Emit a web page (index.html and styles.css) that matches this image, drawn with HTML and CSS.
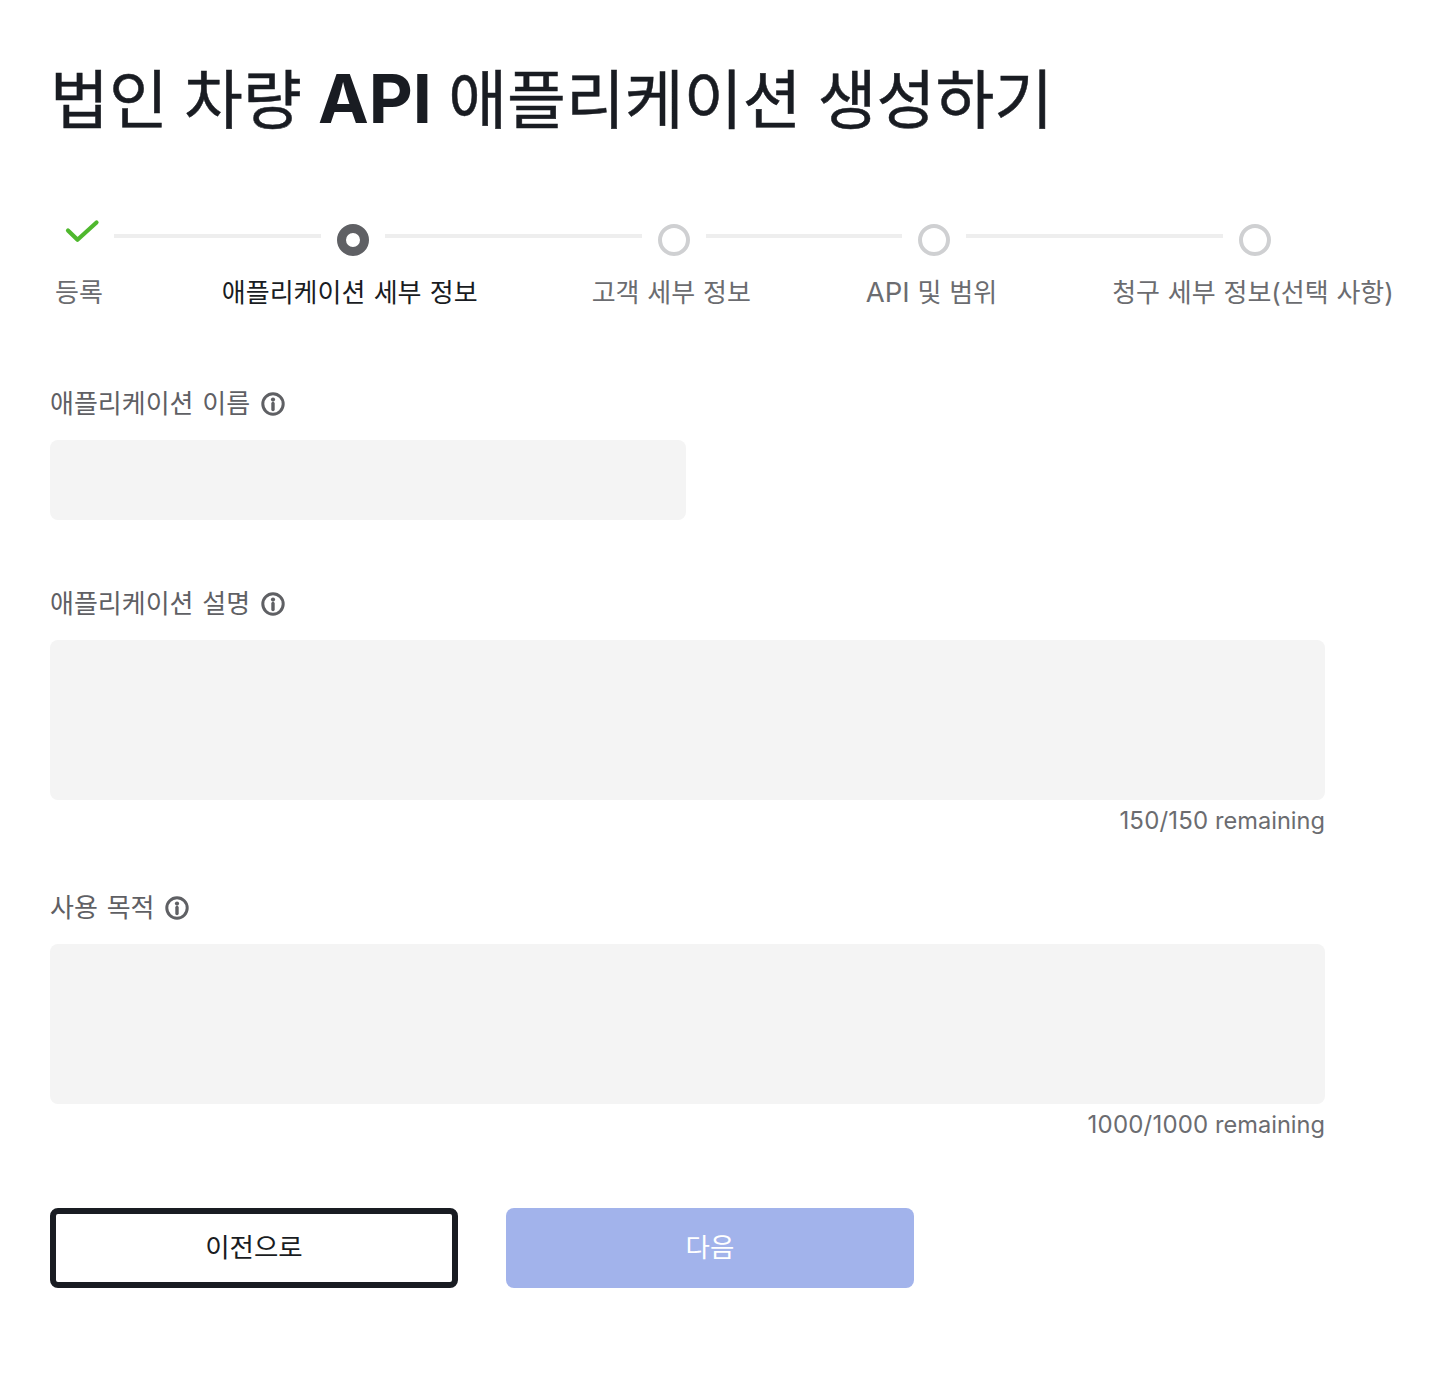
FILE: index.html
```html
<!DOCTYPE html>
<html lang="ko">
<head>
<meta charset="utf-8">
<title>법인 차량 API 애플리케이션 생성하기</title>
<link rel="stylesheet" href="styles.css">
</head>
<body>
<main class="page">
  <h1 class="title">법인 차량 <b class="title-latin">API</b> 애플리케이션 생성하기</h1>

  <div class="stepper">
    <div class="track">
      <svg class="step-icon" viewBox="0 0 32 32"><path d="M2 10.5 L11.5 19.8 L30.5 2.5" fill="none" stroke="#4fb82e" stroke-width="4.2" stroke-linecap="round" stroke-linejoin="round"/></svg>
      <span class="line"></span>
      <span class="dot current"></span>
      <span class="line"></span>
      <span class="dot"></span>
      <span class="line"></span>
      <span class="dot"></span>
      <span class="line"></span>
      <span class="dot"></span>
    </div>
    <ol class="labels">
      <li class="first">등록</li>
      <li class="active">애플리케이션 세부 정보</li>
      <li>고객 세부 정보</li>
      <li><span class="latin">API</span> 및 범위</li>
      <li>청구 세부 정보(선택 사항)</li>
    </ol>
  </div>

  <form class="form">
    <div class="field field-name">
      <label class="label">애플리케이션 이름
        <svg class="info" viewBox="0 0 24 24"><circle cx="12" cy="12" r="10.2" fill="none" stroke="#5f6064" stroke-width="3"/><circle cx="12" cy="7.6" r="2.1" fill="#5f6064"/><path d="M12 11.5v6" stroke="#5f6064" stroke-width="3.4" stroke-linecap="round"/></svg>
      </label>
      <div class="input short"></div>
    </div>
    <div class="field field-desc">
      <label class="label">애플리케이션 설명
        <svg class="info" viewBox="0 0 24 24"><circle cx="12" cy="12" r="10.2" fill="none" stroke="#5f6064" stroke-width="3"/><circle cx="12" cy="7.6" r="2.1" fill="#5f6064"/><path d="M12 11.5v6" stroke="#5f6064" stroke-width="3.4" stroke-linecap="round"/></svg>
      </label>
      <div class="input tall"></div>
      <p class="count"><span class="num">150/150</span> remaining</p>
    </div>
    <div class="field field-use">
      <label class="label">사용 목적
        <svg class="info" viewBox="0 0 24 24"><circle cx="12" cy="12" r="10.2" fill="none" stroke="#5f6064" stroke-width="3"/><circle cx="12" cy="7.6" r="2.1" fill="#5f6064"/><path d="M12 11.5v6" stroke="#5f6064" stroke-width="3.4" stroke-linecap="round"/></svg>
      </label>
      <div class="input tall"></div>
      <p class="count"><span class="num">1000/1000</span> remaining</p>
    </div>
    <div class="actions">
      <button class="btn btn-back" type="button">이전으로</button>
      <button class="btn btn-next" type="button">다음</button>
    </div>
  </form>
</main>
</body>
</html>
```

FILE: styles.css
```css
* { box-sizing: border-box; }
html, body { margin: 0; background: #fff; }
body {
  font-family: Inter, "Noto Sans CJK KR", sans-serif;
  color: #191c22;
}
.page { padding: 60px 0 98px 50px; }
.title {
  margin: 0;
  height: 78px;
  font-size: 64px;
  line-height: 76px;
  font-weight: 400;
  word-spacing: -1.75px;
  -webkit-text-stroke: 0.5px #191c22;
  color: #191c22;
  white-space: nowrap;
}
.title-latin { font-size: 68px; font-weight: 700; -webkit-text-stroke: 0; }

.stepper { margin-top: 82px; }
.track {
  display: grid;
  grid-template-columns: 32px 207px 32px 257px 32px 196px 32px 257px 32px;
  column-gap: 16px;
  padding-left: 16px;
  height: 36px;
}
.step-icon { display: block; width: 32px; height: 32px; overflow: visible; }
.line { display: block; height: 4px; margin-top: 14px; background: #eeeeee; }
.dot {
  display: block;
  width: 32px;
  height: 32px;
  margin-top: 4px;
  border: 4px solid #cfd0d2;
  border-radius: 50%;
  background: #fff;
}
.dot.current { border: 9px solid #5f6064; }
.labels {
  display: flex;
  gap: 115px;
  margin: 0;
  padding: 17px 0 0 5px;
  list-style: none;
  font-size: 26px;
  line-height: 40px;
  word-spacing: 0.5px;
  color: #6b6c70;
  white-space: nowrap;
}
.labels .first { margin-right: 4px; }
.labels .active { margin-right: -1px; word-spacing: 1px; color: #191c22; }
.latin { font-size: 27.5px; line-height: 0; }

.field { width: 1275px; }
.field-name { margin-top: 71px; }
.field-desc { margin-top: 64px; }
.field-use { margin-top: 48px; }
.label {
  display: flex;
  align-items: center;
  gap: 10.5px;
  height: 40px;
  font-size: 26px;
  line-height: 40px;
  word-spacing: 1.5px;
  color: #5f6064;
  white-space: nowrap;
}
.info { width: 24px; height: 24px; flex: none; }
.input {
  margin-top: 16px;
  background: #f4f4f4;
  border-radius: 8px;
}
.short { width: 636px; height: 80px; }
.tall { height: 160px; }
.count {
  margin: 0;
  padding-top: 5px;
  height: 40px;
  font-size: 23.6px;
  line-height: 32px;
  text-align: right;
  color: #6b6c70;
}
.num { font-size: 24px; letter-spacing: 0.2px; }
.actions { display: flex; gap: 48px; margin-top: 64px; }
.btn {
  display: block;
  width: 408px;
  height: 80px;
  border-radius: 8px;
  font: inherit;
  font-size: 26.5px;
  padding: 0 0 6px;
}
.btn-back { background: #fff; border: 6px solid #191c22; color: #191c22; }
.btn-next { background: #a2b3eb; border: 0; color: #fff; }
```
